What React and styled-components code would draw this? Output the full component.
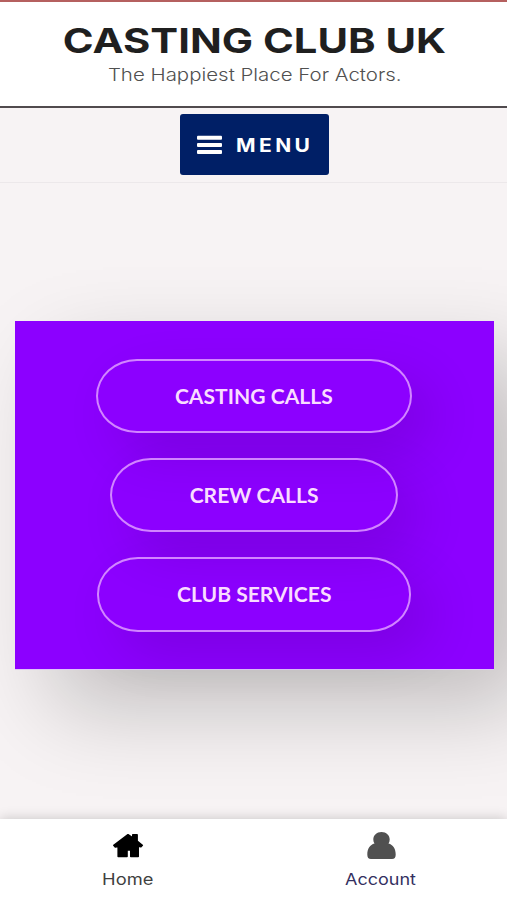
import React from "react";
import styled, { createGlobalStyle } from "styled-components";

const GlobalStyle = createGlobalStyle`
  * { box-sizing: border-box; }
  body { margin: 0; background: #f7f3f4; font-family: Inter, "Open Sans", sans-serif; }
`;

const Page = styled.div`
  display: flex;
  flex-direction: column;
  height: 900px;
  overflow: hidden;
`;

const Header = styled.header`
  display: flex;
  flex-direction: column;
  align-items: center;
  flex: none;
  height: 108px;
  padding: 21px 0 0 2px;
  background: #fff;
  border-top: 2px solid #b5605f;
  border-bottom: 2px solid #504b4e;
`;

const Title = styled.h1`
  margin: 0;
  font-size: 34.5px;
  line-height: 36px;
  font-weight: 700;
  color: #1f1f1f;
  white-space: nowrap;
  transform: scaleX(1.21);
`;

const Tagline = styled.p`
  margin: 4px 0 0;
  font-size: 17.5px;
  line-height: 24px;
  font-weight: 350;
  color: #505050;
  white-space: nowrap;
  transform: scaleX(1.168);
`;

const NavBar = styled.nav`
  display: flex;
  justify-content: center;
  align-items: flex-start;
  flex: none;
  height: 75px;
  padding: 6px 0 0 1px;
  border-bottom: 1px solid #ece8ea;
`;

const MenuButton = styled.button`
  display: flex;
  align-items: center;
  gap: 14px;
  width: 149px;
  height: 61px;
  padding: 0 0 0 17px;
  border: 0;
  border-radius: 3px;
  background: #001f66;
  color: #fff;
`;

const MenuLabel = styled.span`
  font: 700 18.5px/24px Inter, sans-serif;
  letter-spacing: 3px;
  transform: scaleX(1.135);
  transform-origin: left;
`;

const Main = styled.main`
  flex: 1;
  padding: 138px 13px 0 15px;
`;

const Card = styled.section`
  display: flex;
  flex-direction: column;
  align-items: center;
  gap: 25px;
  height: 348px;
  padding: 38px 1px 0 0;
  background: #8c00ff;
  box-shadow: 0 1px 0 0 #dfc5f8, 38px 38px 85px rgba(0, 0, 0, 0.22);
`;

const Pill = styled.button`
  flex: none;
  width: ${(p) => p.$width}px;
  height: 74.2px;
  padding: 0;
  border: 2px solid #d285ff;
  border-radius: 41px / 37px;
  background: transparent;
  box-shadow: 20px 20px 55px rgba(0, 0, 0, 0.12);
  color: #f9dcff;
  font: 700 20px/24px Lato, sans-serif;
`;

const PillLabel = styled.span`
  display: inline-block;
  transform: scaleX(1.055);
`;

const TabBar = styled.footer`
  display: grid;
  grid-template-columns: 1fr 1fr;
  flex: none;
  height: 81px;
  padding-left: 1px;
  background: #fff;
  box-shadow: 0 0 12px rgba(0, 0, 0, 0.2);
  position: relative;
`;

const Tab = styled.a`
  display: flex;
  flex-direction: column;
  align-items: center;
  padding-top: 10px;
  color: ${(p) => p.$color};
`;

const TabIcon = styled.svg`
  display: block;
  width: 34px;
  height: 34px;
`;

const TabLabel = styled.span`
  margin-top: 6px;
  font-size: 15.5px;
  line-height: 22px;
  transform: scaleX(${(p) => p.$stretch});
`;

const actions = [
  { label: "CASTING CALLS", width: 316 },
  { label: "CREW CALLS", width: 287.5 },
  { label: "CLUB SERVICES", width: 313.5 },
];

export default function App() {
  return (
    <Page>
      <GlobalStyle />
      <Header>
        <Title>CASTING CLUB UK</Title>
        <Tagline>The Happiest Place For Actors.</Tagline>
      </Header>
      <NavBar>
        <MenuButton>
          <svg width="25" height="20" viewBox="0 0 25 20" fill="#fff">
            <rect x="0" y="0.8" width="25" height="4" rx="1" />
            <rect x="0" y="7.9" width="25" height="4" rx="1" />
            <rect x="0" y="15" width="25" height="4" rx="1" />
          </svg>
          <MenuLabel>MENU</MenuLabel>
        </MenuButton>
      </NavBar>
      <Main>
        <Card>
          {actions.map((a) => (
            <Pill key={a.label} $width={a.width}>
              <PillLabel>{a.label}</PillLabel>
            </Pill>
          ))}
        </Card>
      </Main>
      <TabBar>
        <Tab $color="#3f3f3f">
          <TabIcon viewBox="0 0 34 34" fill="#000" stroke="#000" strokeLinejoin="round">
            <path d="M17 5.700 21.800 9V5.700h4.300v6.400l5.200 4.200-1.400 1.500-2.700-.6v10.200h-7.400v-6.400h-3.800v6.400H7.200V17.500l-2.900.5-1.500-1.700Z" strokeWidth="1.600" />
          </TabIcon>
          <TabLabel $stretch={1.18}>Home</TabLabel>
        </Tab>
        <Tab $color="#33305f">
          <TabIcon viewBox="0 0 34 34" fill="#505050">
            <path d="M17.500 3c-4.800 0-8.200 3.300-8.200 7.400 0 1.500.4 2.900 1.200 4C6 15.500 3.300 19.800 3.300 25.500c0 3.100 1.200 4.500 3.700 4.500h21c2.500 0 3.700-1.400 3.700-4.500 0-5.700-2.700-10-7.200-11.100.8-1.100 1.200-2.500 1.200-4C25.700 6.300 22.300 3 17.500 3Z" />
          </TabIcon>
          <TabLabel $stretch={1.16}>Account</TabLabel>
        </Tab>
      </TabBar>
    </Page>
  );
}
